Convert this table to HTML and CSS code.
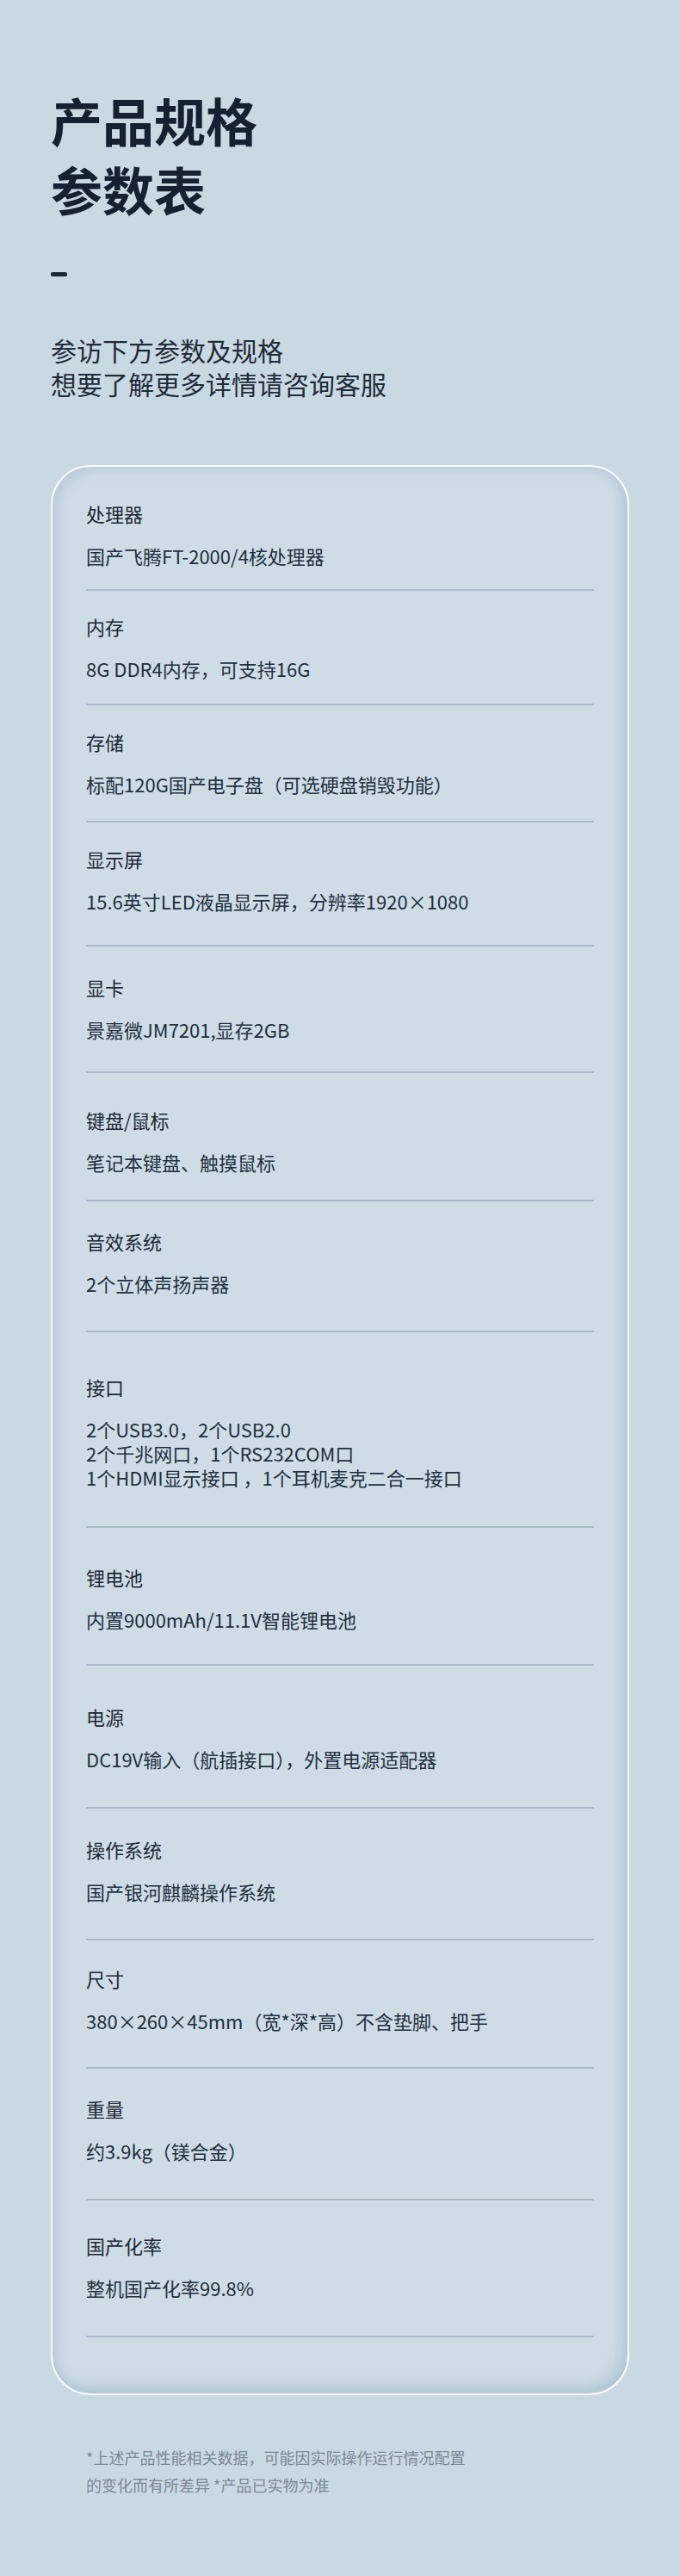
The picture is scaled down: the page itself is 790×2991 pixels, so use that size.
FILE: index.html
```html
<!DOCTYPE html>
<html lang="zh-CN">
<head>
<meta charset="utf-8">
<title>产品规格参数表</title>
<link rel="stylesheet" href="styles.css">
</head>
<body>
<main class="page">
  <header class="intro">
    <h1 class="title">产品规格<br>参数表</h1>
    <div class="dash"></div>
    <p class="subtitle">参访下方参数及规格<br>想要了解更多详情请咨询客服</p>
  </header>

  <section class="card">
    <div class="spec-row"><div class="label">处理器</div><div class="value">国产飞腾FT-2000/4核处理器</div></div>
    <div class="spec-row"><div class="label">内存</div><div class="value">8G DDR4内存，可支持16G</div></div>
    <div class="spec-row"><div class="label">存储</div><div class="value">标配120G国产电子盘（可选硬盘销毁功能）</div></div>
    <div class="spec-row"><div class="label">显示屏</div><div class="value">15.6英寸LED液晶显示屏，分辨率1920×1080</div></div>
    <div class="spec-row"><div class="label">显卡</div><div class="value">景嘉微JM7201,显存2GB</div></div>
    <div class="spec-row"><div class="label">键盘/鼠标</div><div class="value">笔记本键盘、触摸鼠标</div></div>
    <div class="spec-row"><div class="label">音效系统</div><div class="value">2个立体声扬声器</div></div>
    <div class="spec-row"><div class="label">接口</div><div class="value">2个USB3.0，2个USB2.0<br>2个千兆网口，1个RS232COM口<br>1个HDMI显示接口 ，1个耳机麦克二合一接口</div></div>
    <div class="spec-row"><div class="label">锂电池</div><div class="value">内置9000mAh/11.1V智能锂电池</div></div>
    <div class="spec-row"><div class="label">电源</div><div class="value">DC19V输入（航插接口），外置电源适配器</div></div>
    <div class="spec-row"><div class="label">操作系统</div><div class="value">国产银河麒麟操作系统</div></div>
    <div class="spec-row"><div class="label">尺寸</div><div class="value">380×260×45mm（宽*深*高）不含垫脚、把手</div></div>
    <div class="spec-row"><div class="label">重量</div><div class="value">约3.9kg（镁合金）</div></div>
    <div class="spec-row"><div class="label">国产化率</div><div class="value">整机国产化率99.8%</div></div>
  </section>

  <p class="note">*上述产品性能相关数据，可能因实际操作运行情况配置<br>的变化而有所差异 *产品已实物为准</p>
</main>
</body>
</html>
```

FILE: styles.css
```css
html, body {
  margin: 0;
  padding: 0;
  background: #c9d9e2;
}

body {
  font-family: "Noto Sans CJK SC", "Noto Sans", sans-serif;
  color: #1d2a37;
}

.page {
  width: 790px;
  min-height: 2991px;
  box-sizing: border-box;
  padding: 99px 59px 0;
}

.intro {
  padding-left: 0;
}

.title {
  margin: 0;
  font-size: 60px;
  line-height: 80px;
  font-weight: 700;
  color: #142131;
}

.dash {
  width: 19px;
  height: 5px;
  margin-top: 57px;
  border-radius: 2px;
  background: #1a2736;
}

.subtitle {
  margin: 66px 0 0;
  font-size: 30px;
  line-height: 38.5px;
  font-weight: 400;
  color: #1f2c39;
}

.card {
  margin-top: 76px;
  padding: 0 39px 65px;
  background: #cedce5;
  border: 2px solid rgba(255, 255, 255, 0.88);
  border-radius: 46px;
  box-shadow:
    inset 7px 6px 12px rgba(168, 190, 208, 0.45),
    inset -7px -9px 14px rgba(160, 186, 207, 0.6);
}

.spec-row {
  padding: 32px 0 40px;
  border-bottom: 2px solid #a9bbca;
}

.spec-row:nth-child(1)  { padding-top: 40px; padding-bottom: 25px; }
.spec-row:nth-child(2)  { padding-top: 27px; padding-bottom: 27px; }
.spec-row:nth-child(3)  { padding-top: 28px; padding-bottom: 29px; }
.spec-row:nth-child(4)  { padding-top: 28px; padding-bottom: 37px; }
.spec-row:nth-child(5)  { padding-top: 33px; padding-bottom: 35px; }
.spec-row:nth-child(6)  { padding-top: 40px; padding-bottom: 30px; }
.spec-row:nth-child(7)  { padding-top: 32px; padding-bottom: 41px; }
.spec-row:nth-child(8)  { padding-top: 49px; padding-bottom: 43px; }
.spec-row:nth-child(9)  { padding-top: 43px; padding-bottom: 38px; }
.spec-row:nth-child(10) { padding-top: 45px; padding-bottom: 42px; }
.spec-row:nth-child(11) { padding-top: 33px; padding-bottom: 41px; }
.spec-row:nth-child(12) { padding-top: 30px; padding-bottom: 40px; }
.spec-row:nth-child(13) { padding-top: 32px; padding-bottom: 42px; }
.spec-row:nth-child(14) { padding-top: 38px; padding-bottom: 42px; }

.label {
  font-size: 22px;
  line-height: 28px;
  margin-bottom: 21px;
  color: #1c2835;
}

.value {
  font-size: 22px;
  line-height: 28px;
  color: #213040;
}

.note {
  margin: 56px 0 0;
  padding-left: 41px;
  font-size: 18px;
  line-height: 32px;
  color: #7b8893;
}
```
